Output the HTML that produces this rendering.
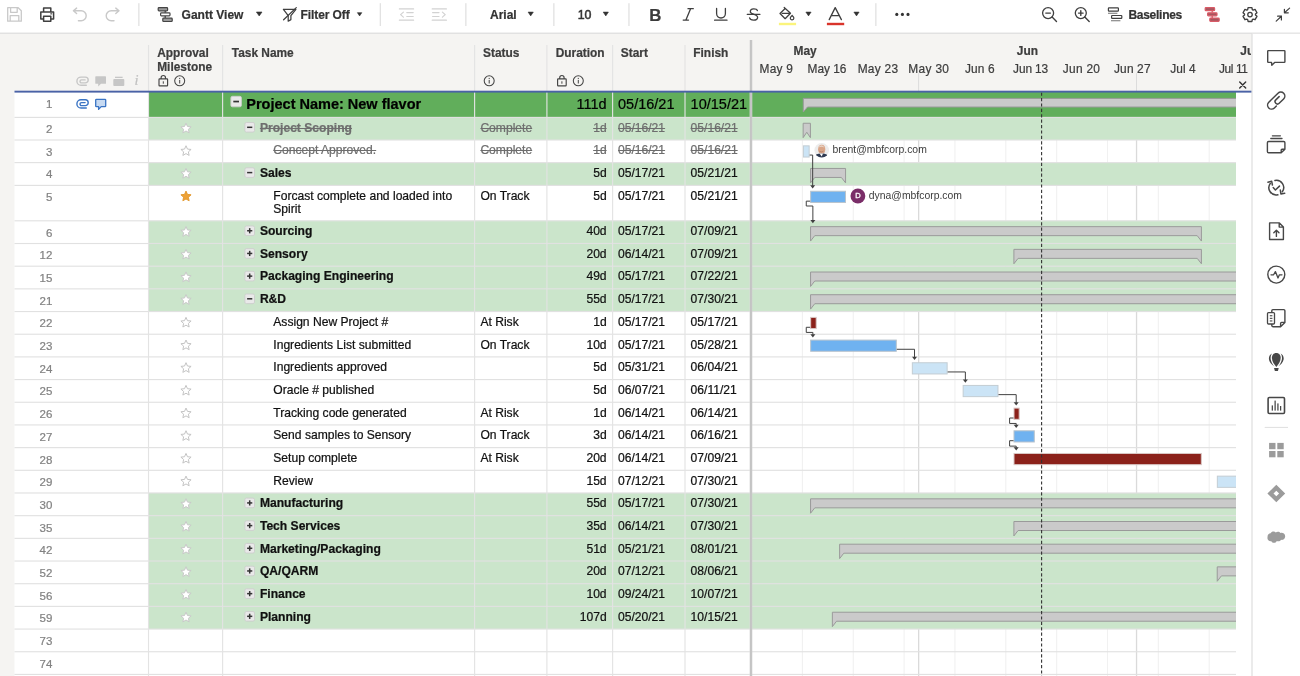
<!DOCTYPE html>
<html lang="en"><head><meta charset="utf-8"><title>Project Plan - Gantt View</title>
<style>
html,body{margin:0;padding:0;}
body{width:1300px;height:676px;overflow:hidden;position:relative;background:#f5f4f2;font-family:"Liberation Sans",sans-serif;}
#bg{position:absolute;left:0;top:0;}
#tx{position:absolute;left:0;top:0;width:1300px;height:676px;overflow:hidden;will-change:transform;}
.t{position:absolute;white-space:nowrap;font-size:12.1px;color:#111;height:22px;line-height:22px;-webkit-text-stroke:0.22px currentColor;}
.rn{font-size:11.5px;color:#828282;}
.b{font-weight:bold;}
.big{font-size:14.5px;color:#000;}
.strike{text-decoration:line-through;color:#6e6e6e;}
.hb{font-weight:bold;font-size:11.9px;color:#3d3d3d;}
.hw{font-size:11.9px;color:#3d3d3d;}
.gl{font-size:10.4px;color:#3c3c3c;-webkit-text-stroke:0;}
.tb{font-weight:bold;font-size:12.0px;color:#333;}
</style></head>
<body>
<svg id="bg" width="1300" height="676" viewBox="0 0 1300 676">
<rect x="0.00" y="0.00" width="1300.00" height="676.00" fill="#f5f4f2" />
<rect x="0.00" y="0.00" width="1300.00" height="33.00" fill="#fff" />
<rect x="0.00" y="32.60" width="1300.00" height="1.20" fill="#dcdcdc" />
<rect x="14.50" y="92.00" width="1221.50" height="584.00" fill="#fff" />
<rect x="1236.00" y="92.50" width="16.00" height="584.00" fill="#fff" />
<rect x="1252.00" y="33.80" width="48.00" height="676.00" fill="#fff" />
<rect x="1251.40" y="33.80" width="1.20" height="676.00" fill="#dedede" />
<rect x="801.85" y="92.5" width="1.1" height="584" fill="#f1f1f1"/>
<rect x="852.70" y="92.5" width="1.1" height="584" fill="#f1f1f1"/>
<rect x="903.55" y="92.5" width="1.1" height="584" fill="#f1f1f1"/>
<rect x="954.40" y="92.5" width="1.1" height="584" fill="#f1f1f1"/>
<rect x="1005.25" y="92.5" width="1.1" height="584" fill="#f1f1f1"/>
<rect x="1056.10" y="92.5" width="1.1" height="584" fill="#f1f1f1"/>
<rect x="1106.95" y="92.5" width="1.1" height="584" fill="#f1f1f1"/>
<rect x="1157.80" y="92.5" width="1.1" height="584" fill="#f1f1f1"/>
<rect x="1208.65" y="92.5" width="1.1" height="584" fill="#f1f1f1"/>
<rect x="918.00" y="92.5" width="1.3" height="584" fill="#dadada"/>
<rect x="1135.90" y="92.5" width="1.3" height="584" fill="#dadada"/>
<rect x="148.50" y="91.80" width="1087.50" height="25.60" fill="#61ae5b" />
<rect x="148.50" y="117.35" width="1087.50" height="22.65" fill="#cbe5cb" />
<rect x="148.50" y="162.55" width="1087.50" height="22.85" fill="#cbe5cb" />
<rect x="148.50" y="220.75" width="1087.50" height="22.75" fill="#cbe5cb" />
<rect x="148.50" y="243.45" width="1087.50" height="22.73" fill="#cbe5cb" />
<rect x="148.50" y="266.13" width="1087.50" height="22.73" fill="#cbe5cb" />
<rect x="148.50" y="288.81" width="1087.50" height="22.73" fill="#cbe5cb" />
<rect x="148.50" y="492.93" width="1087.50" height="22.73" fill="#cbe5cb" />
<rect x="148.50" y="515.61" width="1087.50" height="22.73" fill="#cbe5cb" />
<rect x="148.50" y="538.29" width="1087.50" height="22.73" fill="#cbe5cb" />
<rect x="148.50" y="560.97" width="1087.50" height="22.73" fill="#cbe5cb" />
<rect x="148.50" y="583.65" width="1087.50" height="22.73" fill="#cbe5cb" />
<rect x="148.50" y="606.33" width="1087.50" height="22.73" fill="#cbe5cb" />
<rect x="14.50" y="116.84" width="1221.50" height="1.13" fill="#e1e1e1" />
<rect x="14.50" y="139.44" width="1221.50" height="1.13" fill="#e1e1e1" />
<rect x="14.50" y="162.04" width="1221.50" height="1.13" fill="#e1e1e1" />
<rect x="14.50" y="184.84" width="1221.50" height="1.13" fill="#e1e1e1" />
<rect x="14.50" y="220.24" width="1221.50" height="1.13" fill="#e1e1e1" />
<rect x="14.50" y="242.94" width="1221.50" height="1.13" fill="#e1e1e1" />
<rect x="14.50" y="265.62" width="1221.50" height="1.13" fill="#e1e1e1" />
<rect x="14.50" y="288.30" width="1221.50" height="1.13" fill="#e1e1e1" />
<rect x="14.50" y="310.98" width="1221.50" height="1.13" fill="#e1e1e1" />
<rect x="14.50" y="333.66" width="1221.50" height="1.13" fill="#e1e1e1" />
<rect x="14.50" y="356.34" width="1221.50" height="1.13" fill="#e1e1e1" />
<rect x="14.50" y="379.02" width="1221.50" height="1.13" fill="#e1e1e1" />
<rect x="14.50" y="401.70" width="1221.50" height="1.13" fill="#e1e1e1" />
<rect x="14.50" y="424.38" width="1221.50" height="1.13" fill="#e1e1e1" />
<rect x="14.50" y="447.06" width="1221.50" height="1.13" fill="#e1e1e1" />
<rect x="14.50" y="469.74" width="1221.50" height="1.13" fill="#e1e1e1" />
<rect x="14.50" y="492.42" width="1221.50" height="1.13" fill="#e1e1e1" />
<rect x="14.50" y="515.10" width="1221.50" height="1.13" fill="#e1e1e1" />
<rect x="14.50" y="537.78" width="1221.50" height="1.13" fill="#e1e1e1" />
<rect x="14.50" y="560.46" width="1221.50" height="1.13" fill="#e1e1e1" />
<rect x="14.50" y="583.14" width="1221.50" height="1.13" fill="#e1e1e1" />
<rect x="14.50" y="605.82" width="1221.50" height="1.13" fill="#e1e1e1" />
<rect x="14.50" y="628.50" width="1221.50" height="1.13" fill="#e1e1e1" />
<rect x="14.50" y="651.18" width="1221.50" height="1.13" fill="#e1e1e1" />
<rect x="14.50" y="673.86" width="1221.50" height="1.13" fill="#e1e1e1" />
<rect x="14.50" y="696.54" width="1221.50" height="1.13" fill="#e1e1e1" />
<rect x="147.94" y="45.00" width="1.13" height="631.00" fill="#e3e3e3" />
<rect x="222.04" y="45.00" width="1.13" height="631.00" fill="#e3e3e3" />
<rect x="474.04" y="45.00" width="1.13" height="631.00" fill="#e3e3e3" />
<rect x="546.34" y="45.00" width="1.13" height="631.00" fill="#e3e3e3" />
<rect x="612.04" y="45.00" width="1.13" height="631.00" fill="#e3e3e3" />
<rect x="684.44" y="45.00" width="1.13" height="631.00" fill="#e3e3e3" />
<defs><linearGradient id="dv" x1="0" x2="1" y1="0" y2="0"><stop offset="0" stop-color="#d9d9d9"/><stop offset="0.45" stop-color="#bdbdbd"/><stop offset="1" stop-color="#d0d0d0"/></linearGradient></defs>
<rect x="749.60" y="40.00" width="2.70" height="636.00" fill="url(#dv)" />
<rect x="918.10" y="73.20" width="1.00" height="18.00" fill="#dcdcdc" />
<rect x="1136.00" y="73.20" width="1.00" height="18.00" fill="#dcdcdc" />
<rect x="14.50" y="90.70" width="1236.90" height="1.90" fill="#4a62a6" />
<g clip-path="url(#gclip)"><clipPath id="gclip"><rect x="752.3" y="92.6" width="483.70000000000005" height="676"/></clipPath>
<polygon points="803.30,98.40 1266.00,98.40 1266.00,107.00 807.50,107.00 803.30,112.00" fill="#cacaca" stroke="#9a9a9a" stroke-width="1"/>
<polygon points="803.15,123.25 810.42,123.25 810.42,137.65 806.79,132.25 803.15,137.65" fill="#cacaca" stroke="#9a9a9a" stroke-width="1"/>
<polygon points="810.56,168.45 845.57,168.45 845.57,182.85 841.37,177.45 814.76,177.45 810.56,182.85" fill="#cacaca" stroke="#9a9a9a" stroke-width="1"/>
<polygon points="810.56,226.65 1201.41,226.65 1201.41,241.05 1197.21,235.65 814.76,235.65 810.56,241.05" fill="#cacaca" stroke="#9a9a9a" stroke-width="1"/>
<polygon points="1013.90,249.35 1201.41,249.35 1201.41,263.75 1197.21,258.35 1018.10,258.35 1013.90,263.75" fill="#cacaca" stroke="#9a9a9a" stroke-width="1"/>
<polygon points="810.56,272.03 1266.00,272.03 1266.00,281.03 814.76,281.03 810.56,286.43" fill="#cacaca" stroke="#9a9a9a" stroke-width="1"/>
<polygon points="810.56,294.71 1266.00,294.71 1266.00,303.71 814.76,303.71 810.56,309.11" fill="#cacaca" stroke="#9a9a9a" stroke-width="1"/>
<polygon points="810.56,498.83 1266.00,498.83 1266.00,507.83 814.76,507.83 810.56,513.23" fill="#cacaca" stroke="#9a9a9a" stroke-width="1"/>
<polygon points="1013.90,521.51 1266.00,521.51 1266.00,530.51 1018.10,530.51 1013.90,535.91" fill="#cacaca" stroke="#9a9a9a" stroke-width="1"/>
<polygon points="839.61,544.19 1266.00,544.19 1266.00,553.19 843.81,553.19 839.61,558.59" fill="#cacaca" stroke="#9a9a9a" stroke-width="1"/>
<polygon points="1217.23,566.87 1266.00,566.87 1266.00,575.87 1221.43,575.87 1217.23,581.27" fill="#cacaca" stroke="#9a9a9a" stroke-width="1"/>
<polygon points="832.35,612.23 1266.00,612.23 1266.00,621.23 836.55,621.23 832.35,626.63" fill="#cacaca" stroke="#9a9a9a" stroke-width="1"/>
<rect x="803.40" y="145.85" width="5.76" height="11.200000000000001" fill="#cbe4f6" stroke="#c3cdd3" stroke-width="1"/>
<rect x="810.66" y="191.25" width="34.81" height="11.200000000000001" fill="#6fb2f0" stroke="#b9c3cc" stroke-width="1"/>
<rect x="810.66" y="317.39" width="5.54" height="11.200000000000001" fill="#8b211a" stroke="#d9c8c6" stroke-width="1"/>
<rect x="810.66" y="340.07" width="85.64" height="11.200000000000001" fill="#6fb2f0" stroke="#b9c3cc" stroke-width="1"/>
<rect x="912.33" y="362.75" width="34.81" height="11.200000000000001" fill="#cbe4f6" stroke="#c3cdd3" stroke-width="1"/>
<rect x="963.16" y="385.43" width="34.81" height="11.200000000000001" fill="#cbe4f6" stroke="#c3cdd3" stroke-width="1"/>
<rect x="1014.00" y="408.11" width="5.18" height="11.200000000000001" fill="#8b211a" stroke="#d9c8c6" stroke-width="1"/>
<rect x="1014.00" y="430.79" width="20.29" height="11.200000000000001" fill="#6fb2f0" stroke="#b9c3cc" stroke-width="1"/>
<rect x="1014.00" y="453.47" width="187.31" height="11.200000000000001" fill="#8b211a" stroke="#d9c8c6" stroke-width="1"/>
<rect x="1217.33" y="476.15" width="136.48" height="11.200000000000001" fill="#cbe4f6" stroke="#c3cdd3" stroke-width="1"/>
<polyline points="809.66,155.05 812.66,155.05 812.66,186.05" fill="none" stroke="#404040" stroke-width="1.0"/>
<polygon points="810.16,185.35 815.16,185.35 812.66,188.55" fill="#404040"/>
<polyline points="810.16,201.15 806.26,201.15 806.26,206.00 812.86,206.00 812.86,220.80" fill="none" stroke="#404040" stroke-width="1.0"/>
<polygon points="810.36,220.10 815.36,220.10 812.86,223.30" fill="#404040"/>
<polyline points="810.16,327.29 806.26,327.29 806.26,332.42 812.86,332.42 812.86,334.97" fill="none" stroke="#404040" stroke-width="1.0"/>
<polygon points="810.36,334.27 815.36,334.27 812.86,337.47" fill="#404040"/>
<polyline points="896.81,349.27 914.53,349.27 914.53,357.55" fill="none" stroke="#404040" stroke-width="1.0"/>
<polygon points="912.03,356.85 917.03,356.85 914.53,360.05" fill="#404040"/>
<polyline points="947.64,371.95 965.36,371.95 965.36,380.23" fill="none" stroke="#404040" stroke-width="1.0"/>
<polygon points="962.86,379.53 967.86,379.53 965.36,382.73" fill="#404040"/>
<polyline points="998.47,394.63 1016.20,394.63 1016.20,402.91" fill="none" stroke="#404040" stroke-width="1.0"/>
<polygon points="1013.70,402.21 1018.70,402.21 1016.20,405.41" fill="#404040"/>
<polyline points="1013.50,418.01 1009.60,418.01 1009.60,423.44 1016.20,423.44 1016.20,425.39" fill="none" stroke="#404040" stroke-width="1.0"/>
<polygon points="1013.70,424.69 1018.70,424.69 1016.20,427.89" fill="#404040"/>
<polyline points="1013.50,440.69 1009.60,440.69 1009.60,446.12 1016.20,446.12 1016.20,448.07" fill="none" stroke="#404040" stroke-width="1.0"/>
<polygon points="1013.70,447.37 1018.70,447.37 1016.20,450.57" fill="#404040"/>
<line x1="1041.6" y1="92.6" x2="1041.6" y2="676" stroke="#333" stroke-width="1.1" stroke-dasharray="3.2 2.2"/>
</g>
<rect x="230.90" y="96.30" width="10.5" height="10.5" rx="1.5" fill="#e9e9e9" stroke="#cdcdcd" stroke-width="0.9"/>
<rect x="233.31" y="100.70" width="5.67" height="1.7" fill="#333"/>
<path transform="translate(186.00,128.50)" d="M0.00,-5.35 L1.47,-2.02 L5.09,-1.65 L2.38,0.77 L3.14,4.33 L0.00,2.50 L-3.14,4.33 L-2.38,0.77 L-5.09,-1.65 L-1.47,-2.02 Z" fill="#ffffff" stroke="#c9c9c9" stroke-width="1" stroke-linejoin="round"/>
<rect x="244.90" y="122.50" width="9.6" height="9.6" rx="1.5" fill="#e9e9e9" stroke="#cdcdcd" stroke-width="0.9"/>
<rect x="247.11" y="126.55" width="5.18" height="1.5" fill="#333"/>
<path transform="translate(186.00,151.10)" d="M0.00,-5.35 L1.47,-2.02 L5.09,-1.65 L2.38,0.77 L3.14,4.33 L0.00,2.50 L-3.14,4.33 L-2.38,0.77 L-5.09,-1.65 L-1.47,-2.02 Z" fill="#ffffff" stroke="#c4c4c4" stroke-width="1" stroke-linejoin="round"/>
<path transform="translate(186.00,173.80)" d="M0.00,-5.35 L1.47,-2.02 L5.09,-1.65 L2.38,0.77 L3.14,4.33 L0.00,2.50 L-3.14,4.33 L-2.38,0.77 L-5.09,-1.65 L-1.47,-2.02 Z" fill="#ffffff" stroke="#c9c9c9" stroke-width="1" stroke-linejoin="round"/>
<rect x="244.90" y="167.80" width="9.6" height="9.6" rx="1.5" fill="#e9e9e9" stroke="#cdcdcd" stroke-width="0.9"/>
<rect x="247.11" y="171.85" width="5.18" height="1.5" fill="#333"/>
<path transform="translate(186.00,196.45)" d="M0.00,-5.35 L1.47,-2.02 L5.09,-1.65 L2.38,0.77 L3.14,4.33 L0.00,2.50 L-3.14,4.33 L-2.38,0.77 L-5.09,-1.65 L-1.47,-2.02 Z" fill="#eea236" stroke="#e39a30" stroke-width="1" stroke-linejoin="round"/>
<path transform="translate(186.00,231.95)" d="M0.00,-5.35 L1.47,-2.02 L5.09,-1.65 L2.38,0.77 L3.14,4.33 L0.00,2.50 L-3.14,4.33 L-2.38,0.77 L-5.09,-1.65 L-1.47,-2.02 Z" fill="#ffffff" stroke="#c9c9c9" stroke-width="1" stroke-linejoin="round"/>
<rect x="244.90" y="225.95" width="9.6" height="9.6" rx="1.5" fill="#e9e9e9" stroke="#cdcdcd" stroke-width="0.9"/>
<rect x="247.11" y="230.00" width="5.18" height="1.5" fill="#333"/>
<rect x="248.95" y="228.16" width="1.5" height="5.18" fill="#333"/>
<path transform="translate(186.00,254.64)" d="M0.00,-5.35 L1.47,-2.02 L5.09,-1.65 L2.38,0.77 L3.14,4.33 L0.00,2.50 L-3.14,4.33 L-2.38,0.77 L-5.09,-1.65 L-1.47,-2.02 Z" fill="#ffffff" stroke="#c9c9c9" stroke-width="1" stroke-linejoin="round"/>
<rect x="244.90" y="248.64" width="9.6" height="9.6" rx="1.5" fill="#e9e9e9" stroke="#cdcdcd" stroke-width="0.9"/>
<rect x="247.11" y="252.69" width="5.18" height="1.5" fill="#333"/>
<rect x="248.95" y="250.85" width="1.5" height="5.18" fill="#333"/>
<path transform="translate(186.00,277.32)" d="M0.00,-5.35 L1.47,-2.02 L5.09,-1.65 L2.38,0.77 L3.14,4.33 L0.00,2.50 L-3.14,4.33 L-2.38,0.77 L-5.09,-1.65 L-1.47,-2.02 Z" fill="#ffffff" stroke="#c9c9c9" stroke-width="1" stroke-linejoin="round"/>
<rect x="244.90" y="271.32" width="9.6" height="9.6" rx="1.5" fill="#e9e9e9" stroke="#cdcdcd" stroke-width="0.9"/>
<rect x="247.11" y="275.37" width="5.18" height="1.5" fill="#333"/>
<rect x="248.95" y="273.53" width="1.5" height="5.18" fill="#333"/>
<path transform="translate(186.00,300.00)" d="M0.00,-5.35 L1.47,-2.02 L5.09,-1.65 L2.38,0.77 L3.14,4.33 L0.00,2.50 L-3.14,4.33 L-2.38,0.77 L-5.09,-1.65 L-1.47,-2.02 Z" fill="#ffffff" stroke="#c9c9c9" stroke-width="1" stroke-linejoin="round"/>
<rect x="244.90" y="294.00" width="9.6" height="9.6" rx="1.5" fill="#e9e9e9" stroke="#cdcdcd" stroke-width="0.9"/>
<rect x="247.11" y="298.05" width="5.18" height="1.5" fill="#333"/>
<path transform="translate(186.00,322.68)" d="M0.00,-5.35 L1.47,-2.02 L5.09,-1.65 L2.38,0.77 L3.14,4.33 L0.00,2.50 L-3.14,4.33 L-2.38,0.77 L-5.09,-1.65 L-1.47,-2.02 Z" fill="#ffffff" stroke="#c4c4c4" stroke-width="1" stroke-linejoin="round"/>
<path transform="translate(186.00,345.36)" d="M0.00,-5.35 L1.47,-2.02 L5.09,-1.65 L2.38,0.77 L3.14,4.33 L0.00,2.50 L-3.14,4.33 L-2.38,0.77 L-5.09,-1.65 L-1.47,-2.02 Z" fill="#ffffff" stroke="#c4c4c4" stroke-width="1" stroke-linejoin="round"/>
<path transform="translate(186.00,368.04)" d="M0.00,-5.35 L1.47,-2.02 L5.09,-1.65 L2.38,0.77 L3.14,4.33 L0.00,2.50 L-3.14,4.33 L-2.38,0.77 L-5.09,-1.65 L-1.47,-2.02 Z" fill="#ffffff" stroke="#c4c4c4" stroke-width="1" stroke-linejoin="round"/>
<path transform="translate(186.00,390.72)" d="M0.00,-5.35 L1.47,-2.02 L5.09,-1.65 L2.38,0.77 L3.14,4.33 L0.00,2.50 L-3.14,4.33 L-2.38,0.77 L-5.09,-1.65 L-1.47,-2.02 Z" fill="#ffffff" stroke="#c4c4c4" stroke-width="1" stroke-linejoin="round"/>
<path transform="translate(186.00,413.40)" d="M0.00,-5.35 L1.47,-2.02 L5.09,-1.65 L2.38,0.77 L3.14,4.33 L0.00,2.50 L-3.14,4.33 L-2.38,0.77 L-5.09,-1.65 L-1.47,-2.02 Z" fill="#ffffff" stroke="#c4c4c4" stroke-width="1" stroke-linejoin="round"/>
<path transform="translate(186.00,436.08)" d="M0.00,-5.35 L1.47,-2.02 L5.09,-1.65 L2.38,0.77 L3.14,4.33 L0.00,2.50 L-3.14,4.33 L-2.38,0.77 L-5.09,-1.65 L-1.47,-2.02 Z" fill="#ffffff" stroke="#c4c4c4" stroke-width="1" stroke-linejoin="round"/>
<path transform="translate(186.00,458.76)" d="M0.00,-5.35 L1.47,-2.02 L5.09,-1.65 L2.38,0.77 L3.14,4.33 L0.00,2.50 L-3.14,4.33 L-2.38,0.77 L-5.09,-1.65 L-1.47,-2.02 Z" fill="#ffffff" stroke="#c4c4c4" stroke-width="1" stroke-linejoin="round"/>
<path transform="translate(186.00,481.44)" d="M0.00,-5.35 L1.47,-2.02 L5.09,-1.65 L2.38,0.77 L3.14,4.33 L0.00,2.50 L-3.14,4.33 L-2.38,0.77 L-5.09,-1.65 L-1.47,-2.02 Z" fill="#ffffff" stroke="#c4c4c4" stroke-width="1" stroke-linejoin="round"/>
<path transform="translate(186.00,504.12)" d="M0.00,-5.35 L1.47,-2.02 L5.09,-1.65 L2.38,0.77 L3.14,4.33 L0.00,2.50 L-3.14,4.33 L-2.38,0.77 L-5.09,-1.65 L-1.47,-2.02 Z" fill="#ffffff" stroke="#c9c9c9" stroke-width="1" stroke-linejoin="round"/>
<rect x="244.90" y="498.12" width="9.6" height="9.6" rx="1.5" fill="#e9e9e9" stroke="#cdcdcd" stroke-width="0.9"/>
<rect x="247.11" y="502.17" width="5.18" height="1.5" fill="#333"/>
<rect x="248.95" y="500.33" width="1.5" height="5.18" fill="#333"/>
<path transform="translate(186.00,526.80)" d="M0.00,-5.35 L1.47,-2.02 L5.09,-1.65 L2.38,0.77 L3.14,4.33 L0.00,2.50 L-3.14,4.33 L-2.38,0.77 L-5.09,-1.65 L-1.47,-2.02 Z" fill="#ffffff" stroke="#c9c9c9" stroke-width="1" stroke-linejoin="round"/>
<rect x="244.90" y="520.80" width="9.6" height="9.6" rx="1.5" fill="#e9e9e9" stroke="#cdcdcd" stroke-width="0.9"/>
<rect x="247.11" y="524.85" width="5.18" height="1.5" fill="#333"/>
<rect x="248.95" y="523.01" width="1.5" height="5.18" fill="#333"/>
<path transform="translate(186.00,549.48)" d="M0.00,-5.35 L1.47,-2.02 L5.09,-1.65 L2.38,0.77 L3.14,4.33 L0.00,2.50 L-3.14,4.33 L-2.38,0.77 L-5.09,-1.65 L-1.47,-2.02 Z" fill="#ffffff" stroke="#c9c9c9" stroke-width="1" stroke-linejoin="round"/>
<rect x="244.90" y="543.48" width="9.6" height="9.6" rx="1.5" fill="#e9e9e9" stroke="#cdcdcd" stroke-width="0.9"/>
<rect x="247.11" y="547.53" width="5.18" height="1.5" fill="#333"/>
<rect x="248.95" y="545.69" width="1.5" height="5.18" fill="#333"/>
<path transform="translate(186.00,572.16)" d="M0.00,-5.35 L1.47,-2.02 L5.09,-1.65 L2.38,0.77 L3.14,4.33 L0.00,2.50 L-3.14,4.33 L-2.38,0.77 L-5.09,-1.65 L-1.47,-2.02 Z" fill="#ffffff" stroke="#c9c9c9" stroke-width="1" stroke-linejoin="round"/>
<rect x="244.90" y="566.16" width="9.6" height="9.6" rx="1.5" fill="#e9e9e9" stroke="#cdcdcd" stroke-width="0.9"/>
<rect x="247.11" y="570.21" width="5.18" height="1.5" fill="#333"/>
<rect x="248.95" y="568.37" width="1.5" height="5.18" fill="#333"/>
<path transform="translate(186.00,594.84)" d="M0.00,-5.35 L1.47,-2.02 L5.09,-1.65 L2.38,0.77 L3.14,4.33 L0.00,2.50 L-3.14,4.33 L-2.38,0.77 L-5.09,-1.65 L-1.47,-2.02 Z" fill="#ffffff" stroke="#c9c9c9" stroke-width="1" stroke-linejoin="round"/>
<rect x="244.90" y="588.84" width="9.6" height="9.6" rx="1.5" fill="#e9e9e9" stroke="#cdcdcd" stroke-width="0.9"/>
<rect x="247.11" y="592.89" width="5.18" height="1.5" fill="#333"/>
<rect x="248.95" y="591.05" width="1.5" height="5.18" fill="#333"/>
<path transform="translate(186.00,617.52)" d="M0.00,-5.35 L1.47,-2.02 L5.09,-1.65 L2.38,0.77 L3.14,4.33 L0.00,2.50 L-3.14,4.33 L-2.38,0.77 L-5.09,-1.65 L-1.47,-2.02 Z" fill="#ffffff" stroke="#c9c9c9" stroke-width="1" stroke-linejoin="round"/>
<rect x="244.90" y="611.52" width="9.6" height="9.6" rx="1.5" fill="#e9e9e9" stroke="#cdcdcd" stroke-width="0.9"/>
<rect x="247.11" y="615.57" width="5.18" height="1.5" fill="#333"/>
<rect x="248.95" y="613.73" width="1.5" height="5.18" fill="#333"/>
<rect x="138.20" y="3.20" width="1.30" height="22.80" fill="#e2e2e2" />
<rect x="379.70" y="3.20" width="1.30" height="22.80" fill="#e2e2e2" />
<rect x="465.20" y="3.20" width="1.30" height="22.80" fill="#e2e2e2" />
<rect x="553.20" y="3.20" width="1.30" height="22.80" fill="#e2e2e2" />
<rect x="628.30" y="3.20" width="1.30" height="22.80" fill="#e2e2e2" />
<rect x="875.20" y="3.20" width="1.30" height="22.80" fill="#e2e2e2" />
<path d="M8.4,7.7 H18.2 L21.3,10.8 V21.2 H7.7 V7.7 Z M10.6,7.9 V12.3 H17.2 V7.9 M10.2,21 V15.6 H18.8 V21" fill="none" stroke="#c9c9c9" stroke-width="1.3" stroke-linecap="round" stroke-linejoin="round" />
<path d="M43.6,12 V8 H50.8 V12 M43.6,19 H40.8 V12 H53.6 V19 H50.8 M43.6,16.2 H50.8 V21.2 H43.6 Z" fill="none" stroke="#3f3f3f" stroke-width="1.5" stroke-linecap="round" stroke-linejoin="round" />
<rect x="50.30" y="13.30" width="1.90" height="1.10" fill="#3f3f3f" />
<path d="M76.6,8.1 L73.4,10.7 L76.6,13.5 M73.8,10.7 H81.2 A5,5 0 0 1 81.2,20.7 H78.4" fill="none" stroke="#c9c9c9" stroke-width="1.4" stroke-linecap="round" stroke-linejoin="round" />
<path d="M115.8,8.1 L119,10.7 L115.8,13.5 M118.6,10.7 H111.2 A5,5 0 0 0 111.2,20.7 H114" fill="none" stroke="#c9c9c9" stroke-width="1.4" stroke-linecap="round" stroke-linejoin="round" />
<g transform="translate(157.6,7.1)">
<path d="M7.6,3.4 V5.6 M7.6,8.4 V11" stroke="#444" stroke-width="1.3" fill="none"/>
<rect x="0.6" y="0.6" width="9.4" height="3.1" rx="0.8" fill="#9b9b9b" stroke="#444" stroke-width="1.2"/>
<rect x="3" y="5.8" width="9.4" height="3.0" rx="0.8" fill="#fff" stroke="#444" stroke-width="1.2"/>
<rect x="5.2" y="11.1" width="9.4" height="3.3" rx="0.8" fill="#9b9b9b" stroke="#444" stroke-width="1.2"/>
</g>
<g transform="translate(1204.6,7.0)">
<path d="M7.6,3.4 V5.6 M7.6,8.4 V11" stroke="#d95b67" stroke-width="1.3" fill="none"/>
<rect x="0.6" y="0.6" width="9.4" height="3.1" rx="0.8" fill="#a6565f" stroke="#d95b67" stroke-width="1.2"/>
<rect x="3" y="5.8" width="9.4" height="3.0" rx="0.8" fill="#a6565f" stroke="#d95b67" stroke-width="1.2"/>
<rect x="5.2" y="11.1" width="9.4" height="3.3" rx="0.8" fill="#a6565f" stroke="#d95b67" stroke-width="1.2"/>
</g>
<path d="M256.40,12.00 H262.00 L259.20,16.00 Z" fill="#333" stroke="#333" stroke-width="0.6" stroke-linejoin="round"/>
<path d="M357.40,12.65 H361.80 L359.60,15.95 Z" fill="#333" stroke="#333" stroke-width="0.6" stroke-linejoin="round"/>
<path d="M528.10,12.10 H533.30 L530.70,15.90 Z" fill="#333" stroke="#333" stroke-width="0.6" stroke-linejoin="round"/>
<path d="M603.20,12.10 H608.40 L605.80,15.90 Z" fill="#333" stroke="#333" stroke-width="0.6" stroke-linejoin="round"/>
<path d="M805.90,12.10 H811.10 L808.50,15.90 Z" fill="#333" stroke="#333" stroke-width="0.6" stroke-linejoin="round"/>
<path d="M853.90,12.10 H859.10 L856.50,15.90 Z" fill="#333" stroke="#333" stroke-width="0.6" stroke-linejoin="round"/>
<path d="M283.4,9.3 H295.9 L290.9,15.6 V19.6 L288.2,21.2 V15.6 Z" fill="none" stroke="#3f3f3f" stroke-width="1.25" stroke-linecap="round" stroke-linejoin="round" />
<path d="M283.6,19.8 L296.3,7.6" fill="none" stroke="#3f3f3f" stroke-width="1.25" stroke-linecap="round" stroke-linejoin="round" />
<path d="M399.4,8.9 H413.6 M406.8,12.6 H413.2 M406.8,16.5 H413.2 M399.4,20.2 H413.6 M403.4,12.1 L400.6,14.6 L403.4,17.1" fill="none" stroke="#d2d2d2" stroke-width="1.2" stroke-linecap="round" stroke-linejoin="round" />
<path d="M432.2,8.9 H446.4 M432.6,12.6 H439 M432.6,16.5 H439 M432.2,20.2 H446.4 M442.4,12.1 L445.2,14.6 L442.4,17.1" fill="none" stroke="#d2d2d2" stroke-width="1.2" stroke-linecap="round" stroke-linejoin="round" />
<path d="M688,8.7 H693.3 M683.2,20.1 H688.5 M690.6,8.7 L685.9,20.1" fill="none" stroke="#3f3f3f" stroke-width="1.3" stroke-linecap="round" stroke-linejoin="round" />
<path d="M716.6,8.5 V13.6 A4.4,4.4 0 0 0 725.4,13.6 V8.5 M714.6,20.2 H727" fill="none" stroke="#3f3f3f" stroke-width="1.3" stroke-linecap="round" stroke-linejoin="round" />
<path d="M757.4,10.6 C756.6,8.2 750.2,7.9 750.3,11.4 C750.4,13.6 753,14 754,14.3 C756,14.9 757.8,15.6 757.6,17.6 C757.3,21 750.3,21 749.6,17.9" fill="none" stroke="#3f3f3f" stroke-width="1.3" stroke-linecap="round" stroke-linejoin="round" />
<path d="M747.2,14.3 H760" fill="none" stroke="#3f3f3f" stroke-width="1.2" stroke-linecap="round" stroke-linejoin="round" />
<path d="M784.2,7.5 L790.5,13.3 L785.15,18.7 L780,13.5 L785.15,8.5 M782.2,13.4 H790.2" fill="none" stroke="#3f3f3f" stroke-width="1.25" stroke-linecap="round" stroke-linejoin="round" />
<path d="M792.1,15.3 C793.3,16.6 793.9,17.4 793.9,18.1 A1.8,1.8 0 0 1 790.3,18.1 C790.3,17.4 790.9,16.6 792.1,15.3 Z" fill="none" stroke="#3f3f3f" stroke-width="1.2" stroke-linecap="round" stroke-linejoin="round" />
<rect x="778.90" y="22.80" width="17.20" height="2.40" fill="#fbf47c" />
<path d="M829.2,19.6 L835.2,7.6 L841.4,19.6 M831.2,15.6 H839.3" fill="none" stroke="#3f3f3f" stroke-width="1.3" stroke-linecap="round" stroke-linejoin="round" />
<rect x="826.90" y="22.80" width="17.30" height="2.40" fill="#d9342b" />
<circle cx="896.8" cy="14.4" r="1.55" fill="#333"/>
<circle cx="902.4" cy="14.4" r="1.55" fill="#333"/>
<circle cx="908.0" cy="14.4" r="1.55" fill="#333"/>
<circle cx="1048.1" cy="13.1" r="5.5" fill="none" stroke="#3f3f3f" stroke-width="1.3"/>
<path d="M1052.1,17.1 L1056.5,21.4" fill="none" stroke="#3f3f3f" stroke-width="1.4" stroke-linecap="round" stroke-linejoin="round" />
<path d="M1045.8,13.1 H1050.3999999999999" fill="none" stroke="#3f3f3f" stroke-width="1.4" stroke-linecap="round" stroke-linejoin="round" />
<circle cx="1080.8" cy="13.1" r="5.5" fill="none" stroke="#3f3f3f" stroke-width="1.3"/>
<path d="M1084.8,17.1 L1089.2,21.4" fill="none" stroke="#3f3f3f" stroke-width="1.4" stroke-linecap="round" stroke-linejoin="round" />
<path d="M1078.5,13.1 H1083.1" fill="none" stroke="#3f3f3f" stroke-width="1.4" stroke-linecap="round" stroke-linejoin="round" />
<path d="M1080.8,10.8 V15.4" fill="none" stroke="#3f3f3f" stroke-width="1.4" stroke-linecap="round" stroke-linejoin="round" />
<rect x="1108.4" y="7.9" width="10" height="3.2" rx="0.6" fill="#fff" stroke="#3f3f3f" stroke-width="1.2"/>
<rect x="1111.6" y="15.5" width="10.2" height="2.9" rx="0.6" fill="#fff" stroke="#3f3f3f" stroke-width="1.2"/>
<rect x="1108.00" y="12.70" width="9.40" height="1.20" fill="#8a8a8a" />
<rect x="1111.00" y="20.10" width="9.40" height="1.20" fill="#8a8a8a" />
<path d="M1247.68,9.57 L1248.08,7.61 L1251.92,7.61 L1252.32,9.57 L1253.15,10.04 L1255.05,9.41 L1256.97,12.75 L1255.48,14.07 L1255.48,15.03 L1256.97,16.35 L1255.05,19.69 L1253.15,19.06 L1252.32,19.53 L1251.92,21.49 L1248.08,21.49 L1247.68,19.53 L1246.85,19.06 L1244.95,19.69 L1243.03,16.35 L1244.52,15.03 L1244.52,14.07 L1243.03,12.75 L1244.95,9.41 L1246.85,10.04 Z" fill="none" stroke="#3f3f3f" stroke-width="1.35" stroke-linecap="round" stroke-linejoin="round" />
<circle cx="1250.0" cy="14.55" r="2.25" fill="none" stroke="#3f3f3f" stroke-width="1.3"/>
<path d="M1289.6,8.1 L1284.4,12.8 M1284.4,9.3 V12.8 H1288.3" fill="none" stroke="#3f3f3f" stroke-width="1.2" stroke-linecap="round" stroke-linejoin="round" />
<path d="M1276.2,21.1 L1281.4,16.2 M1277.6,16.2 H1281.4 V19.9" fill="none" stroke="#3f3f3f" stroke-width="1.2" stroke-linecap="round" stroke-linejoin="round" />
<path transform="translate(76.5,76.5)" d="M9.8,8.8 H4.5 A4.1,4.1 0 0 1 4.5,0.6 H8.8 A2.9,2.9 0 0 1 8.8,6.4 H5 A1.5,1.5 0 0 1 5,3.4 H8.6" fill="none" stroke="#c6c6c6" stroke-width="1.4" stroke-linecap="round"/>
<path transform="translate(76.5,99.2)" d="M9.8,8.8 H4.5 A4.1,4.1 0 0 1 4.5,0.6 H8.8 A2.9,2.9 0 0 1 8.8,6.4 H5 A1.5,1.5 0 0 1 5,3.4 H8.6" fill="none" stroke="#3a74c4" stroke-width="1.4" stroke-linecap="round"/>
<path d="M95.9,76.3 H105.4 Q106,76.3 106,76.9 V83.2 Q106,83.8 105.4,83.8 H101 L98.2,86.6 V83.8 H95.9 Q95.3,83.8 95.3,83.2 V76.9 Q95.3,76.3 95.9,76.3 Z" fill="#c6c6c6"/>
<path d="M96.4,99.4 H105 Q105.7,99.4 105.7,100.1 V105.9 Q105.7,106.6 105,106.6 H101.2 L98.6,109.4 V106.6 H96.4 Q95.7,106.6 95.7,105.9 V100.1 Q95.7,99.4 96.4,99.4 Z" fill="#c7daf2" stroke="#3a74c4" stroke-width="1.3" stroke-linejoin="round"/>
<rect x="113.3" y="79" width="11" height="7" rx="0.9" fill="#c6c6c6"/>
<rect x="115.00" y="76.70" width="7.60" height="1.30" fill="#c6c6c6" />
<rect x="159.0" y="78.9" width="8.6" height="6.9" rx="0.6" fill="none" stroke="#444" stroke-width="1.15"/>
<path d="M161.1,78.9 V77.7 A2.2,2.2 0 0 1 165.5,77.7 V78.9" fill="none" stroke="#444" stroke-width="1.15"/>
<rect x="162.8" y="81.3" width="1.0" height="2.4" fill="#444"/>
<circle cx="179.7" cy="80.8" r="5.0" fill="none" stroke="#444" stroke-width="1.05"/>
<rect x="179.2" y="79.89999999999999" width="1.0" height="3.6" fill="#444"/><rect x="179.2" y="77.89999999999999" width="1.0" height="1.1" fill="#444"/>
<circle cx="489.2" cy="80.8" r="5.0" fill="none" stroke="#444" stroke-width="1.05"/>
<rect x="488.7" y="79.89999999999999" width="1.0" height="3.6" fill="#444"/><rect x="488.7" y="77.89999999999999" width="1.0" height="1.1" fill="#444"/>
<rect x="557.6" y="78.9" width="8.6" height="6.9" rx="0.6" fill="none" stroke="#444" stroke-width="1.15"/>
<path d="M559.7,78.9 V77.7 A2.2,2.2 0 0 1 564.1,77.7 V78.9" fill="none" stroke="#444" stroke-width="1.15"/>
<rect x="561.4" y="81.3" width="1.0" height="2.4" fill="#444"/>
<circle cx="578.3" cy="80.8" r="5.0" fill="none" stroke="#444" stroke-width="1.05"/>
<rect x="577.8" y="79.89999999999999" width="1.0" height="3.6" fill="#444"/><rect x="577.8" y="77.89999999999999" width="1.0" height="1.1" fill="#444"/>
<path d="M1239.7,81.9 L1245.7,87.9 M1245.7,81.9 L1239.7,87.9" fill="none" stroke="#333" stroke-width="1.4" stroke-linecap="round" stroke-linejoin="round" />
<g><clipPath id="av"><circle cx="821.7" cy="150.3" r="7.3"/></clipPath><circle cx="821.7" cy="150.3" r="7.3" fill="#ececec"/><g clip-path="url(#av)"><ellipse cx="821.7" cy="149.2" rx="3.6" ry="4.5" fill="#d9a588"/><path d="M817.9,148 Q821.7,142.6 824.7,148 Q821.7,145.6 817.9,148Z" fill="#e9d6c8"/><path d="M813.5,158 Q815,153.4 821.7,153.6 Q827.6,153.4 829,158Z" fill="#2f3a52"/><path d="M819.6,153.6 L821.7,156.4 L823,153.6Z" fill="#fff"/><path d="M818.4,150.6 Q821.7,154.4 824.2,150.6 Q821.7,152.2 818.4,150.6Z" fill="#b9876c"/></g></g>
<circle cx="857.9" cy="196" r="7.4" fill="#7a2d68"/>
<path d="M1268.3,50.6 H1284.3 Q1284.9,50.6 1284.9,51.2 V61.8 Q1284.9,62.4 1284.3,62.4 H1274.6 L1271.8,65.2 L1271.5,62.4 H1268.3 Q1267.7,62.4 1267.7,61.8 V51.2 Q1267.7,50.6 1268.3,50.6 Z" fill="none" stroke="#474747" stroke-width="1.4" stroke-linecap="round" stroke-linejoin="round" />
<path transform="translate(1276.2,100.6) rotate(-44.4)" d="M-3.7,4.0 H-6.45 A4,4 0 0 1 -6.45,-4.0 H6.45 A4,4 0 0 1 6.45,4.0 H0.25 A2.4,2.4 0 0 1 0.25,-0.8 H4.9" fill="none" stroke="#474747" stroke-width="1.5" stroke-linecap="round"/>
<path d="M1272.4,135.8 H1280.4 M1270.8,138.5 H1282" fill="none" stroke="#474747" stroke-width="1.3" stroke-linecap="round" stroke-linejoin="round" />
<path d="M1268.6,141.5 H1283.7 Q1284.9,141.5 1284.9,142.7 V149.2 L1281.2,152.8 H1268.6 Q1267.4,152.8 1267.4,151.6 V142.7 Q1267.4,141.5 1268.6,141.5 Z M1284.7,149.2 H1282 Q1281.2,149.2 1281.2,150 V152.6" fill="none" stroke="#474747" stroke-width="1.4" stroke-linecap="round" stroke-linejoin="round" />
<path d="M1274.9,180.4 A7.3,7.3 0 0 1 1282.3,191.8 M1277.9,194.8 A7.3,7.3 0 0 1 1270.3,183.4" fill="none" stroke="#474747" stroke-width="1.5" stroke-linecap="round" stroke-linejoin="round" />
<path d="M1280.3,190.0 L1280.9,193.9 L1284.7,193.2 M1267.9,182.2 L1271.7,181.3 L1272.4,185.0" fill="none" stroke="#474747" stroke-width="1.5" stroke-linecap="round" stroke-linejoin="round" />
<path d="M1273.2,187.6 L1275.4,190 L1279.5,186.1" fill="none" stroke="#474747" stroke-width="1.5" stroke-linecap="round" stroke-linejoin="round" />
<path d="M1269.6,222.9 H1279.4 L1283.4,226.9 V239.5 H1269.6 Z M1279.2,223.1 V227.1 H1283.2" fill="none" stroke="#474747" stroke-width="1.4" stroke-linecap="round" stroke-linejoin="round" />
<path d="M1276.4,236.4 V230.4 M1273.8,232.8 L1276.4,230.2 L1279,232.8" fill="none" stroke="#474747" stroke-width="1.4" stroke-linecap="round" stroke-linejoin="round" />
<circle cx="1276.3" cy="274.6" r="8.5" fill="none" stroke="#474747" stroke-width="1.4"/>
<path d="M1271,274.8 H1273.6 L1275.4,271.6 L1278,278 L1279.4,274.8 H1282" fill="none" stroke="#474747" stroke-width="1.3" stroke-linecap="round" stroke-linejoin="round" />
<path d="M1271.8,312.4 V310.7 Q1271.8,309.6 1272.9,309.6 H1283.8 Q1284.9,309.6 1284.9,310.7 V322.4 L1280.6,326.7 H1272.9 Q1271.8,326.7 1271.8,325.6 V324.2 M1284.7,322.4 H1281.6 Q1280.6,322.4 1280.6,323.4 V326.5" fill="none" stroke="#474747" stroke-width="1.4" stroke-linecap="round" stroke-linejoin="round" />
<rect x="1267.5" y="312.6" width="7" height="11.4" rx="1" fill="#fff" stroke="#474747" stroke-width="1.3"/>
<rect x="1269.80" y="315.20" width="2.60" height="1.10" fill="#474747" />
<rect x="1269.80" y="317.80" width="2.60" height="1.10" fill="#474747" />
<rect x="1269.80" y="320.40" width="2.60" height="1.10" fill="#474747" />
<path d="M1276.3,353.1 C1279.2,353.1 1280.7,355.4 1280.7,358 C1280.7,361.4 1278.2,364.8 1276.3,366.9 C1274.4,364.8 1271.9,361.4 1271.9,358 C1271.9,355.4 1273.4,353.1 1276.3,353.1 Z" fill="#474747"/>
<path d="M1271.9,353.6 C1269.6,354.8 1268.6,357.2 1269,359.4 C1269.5,362.2 1271.8,364.6 1274.4,366.6 C1272.6,364.4 1271,361.6 1270.7,359.2 C1270.4,357 1270.8,355.2 1271.9,353.6 Z M1280.7,353.6 C1283.0,354.8 1284.0,357.2 1283.6,359.4 C1283.1,362.2 1280.8,364.6 1278.2,366.6 C1280.0,364.4 1281.6,361.6 1281.9,359.2 C1282.2,357 1281.8,355.2 1280.7,353.6 Z" fill="#474747"/>
<path d="M1274,368.1 H1278.7 L1277.9,371 H1274.9 Z" fill="#474747"/>
<rect x="1268.1" y="397.5" width="16.4" height="16" rx="1.2" fill="none" stroke="#474747" stroke-width="1.6"/>
<rect x="1271.70" y="405.40" width="1.25" height="5.20" fill="#474747" />
<rect x="1274.50" y="400.60" width="1.25" height="10.00" fill="#474747" />
<rect x="1277.30" y="403.40" width="1.25" height="7.20" fill="#474747" />
<rect x="1280.00" y="406.00" width="1.25" height="4.60" fill="#474747" />
<rect x="1264.70" y="426.90" width="23.30" height="1.10" fill="#e2e2e2" />
<rect x="1269.10" y="442.90" width="6.40" height="6.30" fill="#9b9b9b" />
<rect x="1269.10" y="451.00" width="6.40" height="6.30" fill="#9b9b9b" />
<rect x="1277.30" y="442.90" width="6.40" height="6.30" fill="#9b9b9b" />
<rect x="1277.30" y="451.00" width="6.40" height="6.30" fill="#9b9b9b" />
<path d="M1276.3,484.7 L1285.2,493.5 L1276.3,502.3 L1267.4,493.5 Z M1276.3,490.7 L1273.5,493.5 L1276.3,496.3 L1279.1,493.5 Z" fill="#9b9b9b" fill-rule="evenodd"/>
<path d="M1270.6,533.2 C1271.6,531.2 1274.6,531 1275.8,532.6 C1277,531.2 1279.6,531.4 1280.4,533 C1283.2,532.2 1285.6,534.4 1285.1,537 C1284.8,539.2 1282.6,540.2 1281,539.8 C1280.2,541.4 1278,541.8 1276.8,540.9 C1275.8,543.2 1272.4,543.4 1271.4,541.2 C1268.6,541.6 1266.8,539.2 1267.6,537 C1267.2,535 1268.8,533.2 1270.6,533.2 Z" fill="#9b9b9b"/>
</svg>
<div id="tx">
<div class="t rn" style="right:1247.60px;top:93px;">1</div>
<div class="t b big" style="left:246.30px;top:93px;">Project Name: New flavor</div>
<div class="t big" style="right:693.40px;top:93px;">111d</div>
<div class="t big" style="left:618.00px;top:93px;">05/16/21</div>
<div class="t big" style="left:690.60px;top:93px;">10/15/21</div>
<div class="t rn" style="right:1247.60px;top:118px;">2</div>
<div class="t b strike " style="left:259.90px;top:117px;">Project Scoping</div>
<div class="t strike " style="left:480.40px;top:117px;">Complete</div>
<div class="t strike " style="right:693.40px;top:117px;">1d</div>
<div class="t strike " style="left:618.00px;top:117px;">05/16/21</div>
<div class="t strike " style="left:690.60px;top:117px;">05/16/21</div>
<div class="t rn" style="right:1247.60px;top:141px;">3</div>
<div class="t strike " style="left:273.30px;top:139px;">Concept Approved.</div>
<div class="t strike " style="left:480.40px;top:139px;">Complete</div>
<div class="t strike " style="right:693.40px;top:139px;">1d</div>
<div class="t strike " style="left:618.00px;top:139px;">05/16/21</div>
<div class="t strike " style="left:690.60px;top:139px;">05/16/21</div>
<div class="t rn" style="right:1247.60px;top:163px;">4</div>
<div class="t b " style="left:259.90px;top:162px;">Sales</div>
<div class="t " style="right:693.40px;top:162px;">5d</div>
<div class="t " style="left:618.00px;top:162px;">05/17/21</div>
<div class="t " style="left:690.60px;top:162px;">05/21/21</div>
<div class="t rn" style="right:1247.60px;top:186px;">5</div>
<div class="t " style="left:273.30px;top:185px;">Forcast complete and loaded into</div>
<div class="t " style="left:273.30px;top:198px;">Spirit</div>
<div class="t " style="left:480.40px;top:185px;">On Track</div>
<div class="t " style="right:693.40px;top:185px;">5d</div>
<div class="t " style="left:618.00px;top:185px;">05/17/21</div>
<div class="t " style="left:690.60px;top:185px;">05/21/21</div>
<div class="t rn" style="right:1247.60px;top:222px;">6</div>
<div class="t b " style="left:259.90px;top:220px;">Sourcing</div>
<div class="t " style="right:693.40px;top:220px;">40d</div>
<div class="t " style="left:618.00px;top:220px;">05/17/21</div>
<div class="t " style="left:690.60px;top:220px;">07/09/21</div>
<div class="t rn" style="right:1247.60px;top:244px;">12</div>
<div class="t b " style="left:259.90px;top:243px;">Sensory</div>
<div class="t " style="right:693.40px;top:243px;">20d</div>
<div class="t " style="left:618.00px;top:243px;">06/14/21</div>
<div class="t " style="left:690.60px;top:243px;">07/09/21</div>
<div class="t rn" style="right:1247.60px;top:267px;">15</div>
<div class="t b " style="left:259.90px;top:265px;">Packaging Engineering</div>
<div class="t " style="right:693.40px;top:265px;">49d</div>
<div class="t " style="left:618.00px;top:265px;">05/17/21</div>
<div class="t " style="left:690.60px;top:265px;">07/22/21</div>
<div class="t rn" style="right:1247.60px;top:290px;">21</div>
<div class="t b " style="left:259.90px;top:288px;">R&amp;D</div>
<div class="t " style="right:693.40px;top:288px;">55d</div>
<div class="t " style="left:618.00px;top:288px;">05/17/21</div>
<div class="t " style="left:690.60px;top:288px;">07/30/21</div>
<div class="t rn" style="right:1247.60px;top:312px;">22</div>
<div class="t " style="left:273.30px;top:311px;">Assign New Project #</div>
<div class="t " style="left:480.40px;top:311px;">At Risk</div>
<div class="t " style="right:693.40px;top:311px;">1d</div>
<div class="t " style="left:618.00px;top:311px;">05/17/21</div>
<div class="t " style="left:690.60px;top:311px;">05/17/21</div>
<div class="t rn" style="right:1247.60px;top:335px;">23</div>
<div class="t " style="left:273.30px;top:334px;">Ingredients List submitted</div>
<div class="t " style="left:480.40px;top:334px;">On Track</div>
<div class="t " style="right:693.40px;top:334px;">10d</div>
<div class="t " style="left:618.00px;top:334px;">05/17/21</div>
<div class="t " style="left:690.60px;top:334px;">05/28/21</div>
<div class="t rn" style="right:1247.60px;top:358px;">24</div>
<div class="t " style="left:273.30px;top:356px;">Ingredients approved</div>
<div class="t " style="right:693.40px;top:356px;">5d</div>
<div class="t " style="left:618.00px;top:356px;">05/31/21</div>
<div class="t " style="left:690.60px;top:356px;">06/04/21</div>
<div class="t rn" style="right:1247.60px;top:380px;">25</div>
<div class="t " style="left:273.30px;top:379px;">Oracle # published</div>
<div class="t " style="right:693.40px;top:379px;">5d</div>
<div class="t " style="left:618.00px;top:379px;">06/07/21</div>
<div class="t " style="left:690.60px;top:379px;">06/11/21</div>
<div class="t rn" style="right:1247.60px;top:403px;">26</div>
<div class="t " style="left:273.30px;top:402px;">Tracking code generated</div>
<div class="t " style="left:480.40px;top:402px;">At Risk</div>
<div class="t " style="right:693.40px;top:402px;">1d</div>
<div class="t " style="left:618.00px;top:402px;">06/14/21</div>
<div class="t " style="left:690.60px;top:402px;">06/14/21</div>
<div class="t rn" style="right:1247.60px;top:426px;">27</div>
<div class="t " style="left:273.30px;top:424px;">Send samples to Sensory</div>
<div class="t " style="left:480.40px;top:424px;">On Track</div>
<div class="t " style="right:693.40px;top:424px;">3d</div>
<div class="t " style="left:618.00px;top:424px;">06/14/21</div>
<div class="t " style="left:690.60px;top:424px;">06/16/21</div>
<div class="t rn" style="right:1247.60px;top:449px;">28</div>
<div class="t " style="left:273.30px;top:447px;">Setup complete</div>
<div class="t " style="left:480.40px;top:447px;">At Risk</div>
<div class="t " style="right:693.40px;top:447px;">20d</div>
<div class="t " style="left:618.00px;top:447px;">06/14/21</div>
<div class="t " style="left:690.60px;top:447px;">07/09/21</div>
<div class="t rn" style="right:1247.60px;top:471px;">29</div>
<div class="t " style="left:273.30px;top:470px;">Review</div>
<div class="t " style="right:693.40px;top:470px;">15d</div>
<div class="t " style="left:618.00px;top:470px;">07/12/21</div>
<div class="t " style="left:690.60px;top:470px;">07/30/21</div>
<div class="t rn" style="right:1247.60px;top:494px;">30</div>
<div class="t b " style="left:259.90px;top:492px;">Manufacturing</div>
<div class="t " style="right:693.40px;top:492px;">55d</div>
<div class="t " style="left:618.00px;top:492px;">05/17/21</div>
<div class="t " style="left:690.60px;top:492px;">07/30/21</div>
<div class="t rn" style="right:1247.60px;top:517px;">35</div>
<div class="t b " style="left:259.90px;top:515px;">Tech Services</div>
<div class="t " style="right:693.40px;top:515px;">35d</div>
<div class="t " style="left:618.00px;top:515px;">06/14/21</div>
<div class="t " style="left:690.60px;top:515px;">07/30/21</div>
<div class="t rn" style="right:1247.60px;top:539px;">42</div>
<div class="t b " style="left:259.90px;top:538px;">Marketing/Packaging</div>
<div class="t " style="right:693.40px;top:538px;">51d</div>
<div class="t " style="left:618.00px;top:538px;">05/21/21</div>
<div class="t " style="left:690.60px;top:538px;">08/01/21</div>
<div class="t rn" style="right:1247.60px;top:562px;">52</div>
<div class="t b " style="left:259.90px;top:560px;">QA/QARM</div>
<div class="t " style="right:693.40px;top:560px;">20d</div>
<div class="t " style="left:618.00px;top:560px;">07/12/21</div>
<div class="t " style="left:690.60px;top:560px;">08/06/21</div>
<div class="t rn" style="right:1247.60px;top:585px;">56</div>
<div class="t b " style="left:259.90px;top:583px;">Finance</div>
<div class="t " style="right:693.40px;top:583px;">10d</div>
<div class="t " style="left:618.00px;top:583px;">09/24/21</div>
<div class="t " style="left:690.60px;top:583px;">10/07/21</div>
<div class="t rn" style="right:1247.60px;top:607px;">59</div>
<div class="t b " style="left:259.90px;top:606px;">Planning</div>
<div class="t " style="right:693.40px;top:606px;">107d</div>
<div class="t " style="left:618.00px;top:606px;">05/20/21</div>
<div class="t " style="left:690.60px;top:606px;">10/15/21</div>
<div class="t rn" style="right:1247.60px;top:630px;">73</div>
<div class="t rn" style="right:1247.60px;top:653px;">74</div>
<div class="t rn" style="right:1247.60px;top:675px;">75</div>
<div class="t hb" style="left:157.20px;top:42px;">Approval</div>
<div class="t hb" style="left:157.20px;top:56px;">Milestone</div>
<div class="t hb" style="left:231.80px;top:42px;">Task Name</div>
<div class="t hb" style="left:483.00px;top:42px;">Status</div>
<div class="t hb" style="left:555.70px;top:42px;">Duration</div>
<div class="t hb" style="left:620.80px;top:42px;">Start</div>
<div class="t hb" style="left:693.30px;top:42px;">Finish</div>
<div class="t hb" style="left:793.50px;top:40px;">May</div>
<div class="t hb" style="left:1016.80px;top:40px;">Jun</div>
<div class="t hb" style="left:1240.30px;top:40px;width:11.10px;overflow:hidden;">Jul</div>
<div class="t hw" style="left:759.60px;top:58px;letter-spacing:0.2px;">May 9</div>
<div class="t hw" style="left:807.60px;top:58px;letter-spacing:-0.04px;">May 16</div>
<div class="t hw" style="left:857.70px;top:58px;letter-spacing:0.28px;">May 23</div>
<div class="t hw" style="left:908.20px;top:58px;letter-spacing:0.36px;">May 30</div>
<div class="t hw" style="left:964.90px;top:58px;letter-spacing:0.15px;">Jun 6</div>
<div class="t hw" style="left:1013.10px;top:58px;letter-spacing:-0.12px;">Jun 13</div>
<div class="t hw" style="left:1062.80px;top:58px;letter-spacing:0.28px;">Jun 20</div>
<div class="t hw" style="left:1114.00px;top:58px;letter-spacing:0.16px;">Jun 27</div>
<div class="t hw" style="left:1170.20px;top:58px;letter-spacing:0.08px;">Jul 4</div>
<div class="t hw" style="left:1219.10px;top:58px;letter-spacing:-0.42px;">Jul 11</div>
<div class="t gl" style="left:832.50px;top:139px;">brent@mbfcorp.com</div>
<div class="t gl" style="left:868.80px;top:185px;">dyna@mbfcorp.com</div>
<div class="t" style="left:134.6px;top:72.2px;height:16px;line-height:16px;font-family:'Liberation Serif',serif;font-style:italic;font-size:14.5px;color:#c2c2c2;">i</div>
<div class="t tb" style="left:181.60px;top:4px;">Gantt View</div>
<div class="t tb" style="left:300.60px;top:4px;letter-spacing:-0.1px;">Filter Off</div>
<div class="t tb" style="left:490.00px;top:4px;">Arial</div>
<div class="t tb" style="left:577.70px;top:4px;font-size:12.4px;font-weight:normal;-webkit-text-stroke:0.5px #333;">10</div>
<div class="t tb" style="left:1128.40px;top:4px;letter-spacing:-0.27px;">Baselines</div>
<div class="t " style="left:649.20px;top:5px;font-weight:bold;font-size:16.8px;color:#3a3a3a;">B</div>
<div class="t " style="left:850.50px;top:185px;width:14.8px;text-align:center;font-size:7.5px;color:#fff;-webkit-text-stroke:0.3px #fff;">D</div>
</div>
</body></html>
